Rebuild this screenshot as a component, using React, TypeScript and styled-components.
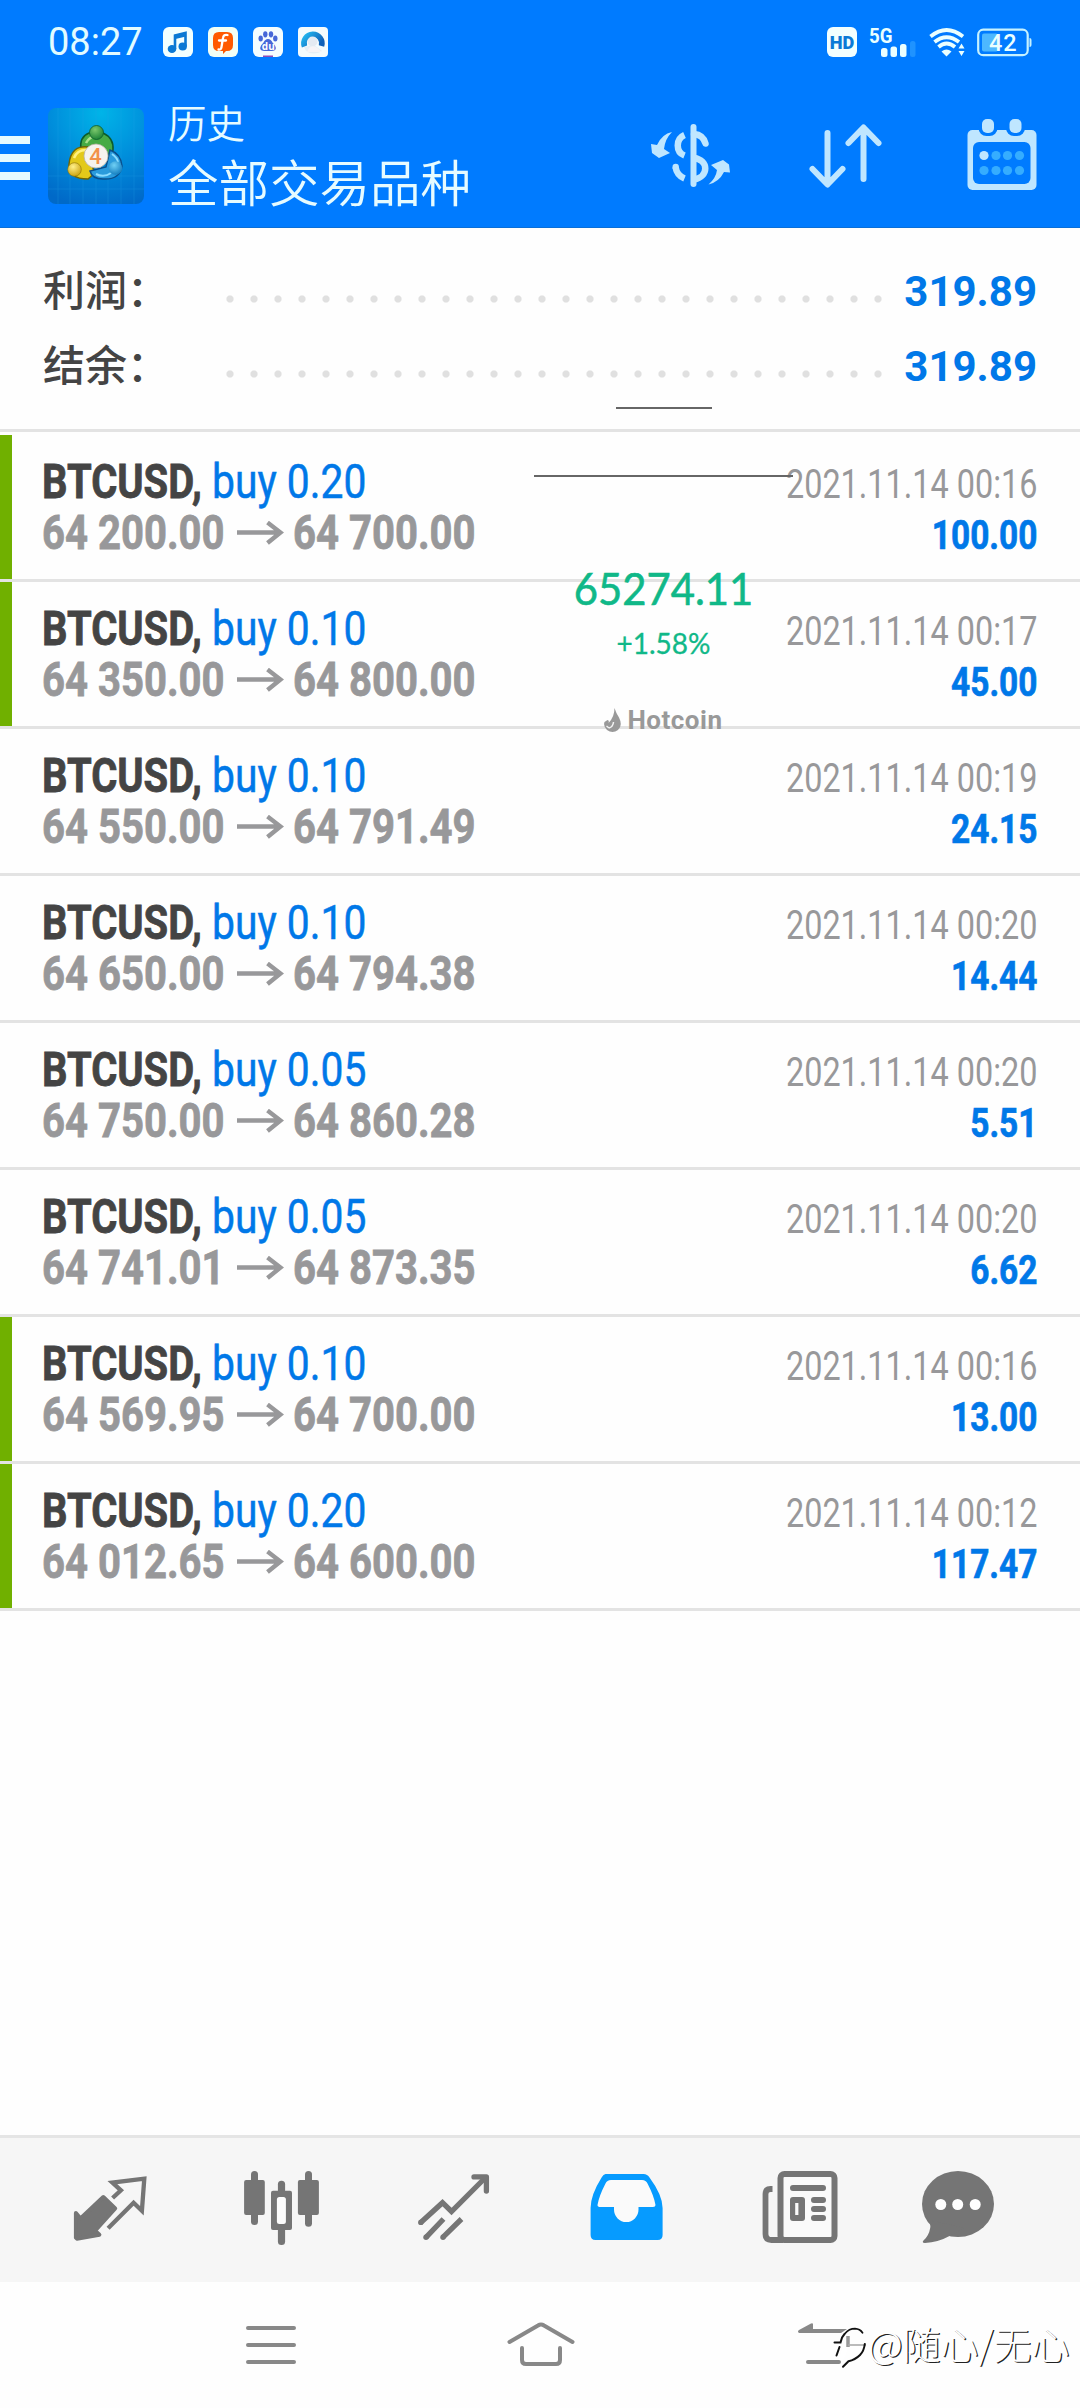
import React from 'react';
import styled, { createGlobalStyle } from 'styled-components';

const GlobalStyle = createGlobalStyle`
  * { box-sizing: border-box; }
  body { margin: 0; background: #fefefe; }
  svg { display: block; flex: none; }
`;

const roboto = `Roboto, "Noto Sans CJK SC", sans-serif`;
const cjk = `"Noto Sans CJK SC", sans-serif`;
const ice = '#bfe6ff';
const grey = '#757575';

const Screen = styled.div`
  position: relative;
  width: 1080px;
  height: 2408px;
  display: flex;
  flex-direction: column;
  overflow: hidden;
  background: #fefefe;
  font-family: ${roboto};
`;

const Header = styled.header`
  height: 228px;
  flex: none;
  background: #007bff;
  border-bottom: 1px solid #0a6fd8;
`;

const StatusBar = styled.div`
  height: 84px;
  padding: 0 48px;
  display: flex;
  align-items: center;
  justify-content: space-between;
`;

const StatusGroup = styled.div<{ $gap: number }>`
  display: flex;
  align-items: center;
  gap: ${(p) => p.$gap}px;
`;

const Clock = styled.span`
  width: 100px;
  font-size: 38px;
  line-height: 84px;
  color: #e2fbff;
  white-space: nowrap;
`;

const Toolbar = styled.div`
  height: 143px;
  display: flex;
  align-items: flex-start;
`;

const Burger = styled.div`
  width: 30px;
  margin-top: 52px;
  display: flex;
  flex-direction: column;
  gap: 10px;
`;

const BurgerBar = styled.span`
  height: 8px;
  background: #e6faff;
`;

const LogoBox = styled.div`
  margin: 24px 24px 0 18px;
`;

const Titles = styled.div`
  flex: 1;
  display: flex;
  flex-direction: column;
  font-family: ${cjk};
  font-weight: 350;
  color: #e6fbff;
`;

const Caption = styled.span`
  margin-top: 13px;
  font-size: 38.5px;
  line-height: 48px;
`;

const Title = styled.span`
  font-size: 50.5px;
  line-height: 70px;
`;

const Actions = styled.div`
  display: flex;
  align-items: flex-start;
  padding: 31px 43px 0 0;
`;

const Action = styled.div<{ $top: number; $gap: number }>`
  margin: ${(p) => p.$top}px ${(p) => p.$gap}px 0 0;
`;

const Summary = styled.section`
  height: 204px;
  flex: none;
  padding: 26px 43px 0 43px;
  border-bottom: 3px solid #e3e3e3;
`;

const SummaryRow = styled.div`
  height: 75px;
  display: flex;
  align-items: center;
`;

const SummaryLabel = styled.span`
  width: 175px;
  font-family: ${cjk};
  font-weight: 500;
  font-size: 42px;
  line-height: 67px;
  height: 75px;
  color: #444;
`;

const Leader = styled.div`
  width: 672px;
  height: 75px;
  background: radial-gradient(circle at 12px 45px, #e0e0e0 3px, transparent 4.2px) 0 0 / 24px 75px repeat-x;
`;

const SummaryValue = styled.span`
  flex: 1;
  text-align: right;
  font-weight: 700;
  font-size: 42px;
  line-height: 75px;
  color: #0078e8;
`;

const List = styled.section`
  flex: 1;
  padding-top: 3px;
`;

const Row = styled.article`
  height: 147px;
  display: flex;
  border-bottom: 3px solid #e3e3e3;
`;

const Marker = styled.span<{ $closed: boolean }>`
  width: 12px;
  background: ${(p) => (p.$closed ? '#70b000' : 'transparent')};
`;

const Deal = styled.div`
  flex: 1;
  padding: 21px 0 0 30px;
`;

const Line = styled.div`
  height: 51px;
  display: flex;
  align-items: center;
`;

const Slot = styled.span<{ $width: number }>`
  width: ${(p) => p.$width}px;
  white-space: nowrap;
`;

const Condensed = styled.span<{ $scale: number; $color: string; $bold?: boolean }>`
  display: inline-block;
  transform: scaleX(${(p) => p.$scale});
  transform-origin: left center;
  font-size: 48px;
  line-height: 51px;
  font-weight: ${(p) => (p.$bold ? 700 : 400)};
  -webkit-text-stroke: ${(p) => (p.$bold ? 0.8 : 0.5)}px currentColor;
  color: ${(p) => p.$color};
  white-space: pre;
`;

const Result = styled.div`
  width: 320px;
  padding: 24px 42.5px 0 0;
  display: flex;
  flex-direction: column;
  align-items: flex-end;
`;

const ResultText = styled(Condensed)`
  transform-origin: right center;
  font-size: 40px;
  -webkit-text-stroke-width: ${(p) => (p.$bold ? 0.7 : 0)}px;
`;

const Quote = styled.aside`
  position: absolute;
  top: 407px;
  left: 534px;
  width: 259px;
  display: flex;
  flex-direction: column;
  align-items: center;
`;

const Rule = styled.span<{ $width: number; $gap: number }>`
  width: ${(p) => p.$width}px;
  height: 2px;
  margin-bottom: ${(p) => p.$gap}px;
  background: #666;
`;

const Price = styled.span`
  font-family: Lato, sans-serif;
  font-size: 44px;
  line-height: 50px;
  color: #10b888;
  -webkit-text-stroke: 0.6px currentColor;
  transform: scaleX(0.95);
  margin-bottom: 13px;
`;

const Change = styled.span`
  font-family: Lato, sans-serif;
  font-size: 28px;
  line-height: 34px;
  color: #10b888;
  -webkit-text-stroke: 0.3px currentColor;
  margin-bottom: 45px;
`;

const Brand = styled.span`
  display: flex;
  align-items: center;
  gap: 6px;
  font-weight: 700;
  font-size: 26px;
  letter-spacing: 0.5px;
  line-height: 30px;
  color: #999;
`;

const TabBar = styled.nav`
  height: 147px;
  flex: none;
  display: flex;
  align-items: flex-start;
  padding: 24px 24px 0;
  background: #f6f6f6;
  border-top: 3px solid #e5e5e5;
`;

const Tab = styled.div`
  flex: 1;
  display: flex;
  justify-content: center;
`;

const SystemNav = styled.footer`
  height: 126px;
  flex: none;
  display: flex;
  padding: 36px 0 0 236px;
`;

const NavKey = styled.div<{ $gap: number }>`
  margin-right: ${(p) => p.$gap}px;
`;

const Watermark = styled.div`
  position: absolute;
  top: 2316px;
  left: 831px;
  display: flex;
  align-items: center;
  font-family: ${cjk};
  font-weight: 300;
  font-size: 38px;
  line-height: 54px;
  color: #fff;
  text-shadow: 1.2px 0.8px 0.3px #222;
  white-space: nowrap;
`;

const MusicBadge = () => (
  <svg width="30" height="30" viewBox="0 0 30 30">
    <rect width="30" height="30" rx="6" fill="#f2ffff" />
    <path d="M12 22V8.500L22.500 6v13.500" fill="none" stroke="#0b79d4" strokeWidth="2.600" />
    <path d="M12 10L22.500 7.500" stroke="#0b79d4" strokeWidth="4" />
    <ellipse cx="9" cy="22" rx="4.300" ry="4" fill="#0b79d4" />
    <ellipse cx="19.700" cy="19.500" rx="4.200" ry="4" fill="#0b79d4" />
  </svg>
);

const FBadge = () => (
  <svg width="30" height="30" viewBox="0 0 30 30">
    <rect width="30" height="30" rx="6" fill="#f2fff6" />
    <path d="M11 5h8q6 0 6 6v7q0 6-6 6h-1l-3 3v-3h-4q-6 0-6-6v-7q0-6 6-6z" fill="#ff5a00" />
    <path d="M19.500 8q-4-1-4.500 3l-1.500 9q-.5 3-3 2.500M11 13.500h7" fill="none" stroke="#fff" strokeWidth="2.300" strokeLinecap="round" />
  </svg>
);

const DuText = styled.text`
  font-family: "Open Sans", sans-serif;
  font-weight: 700;
  font-size: 10px;
  fill: #fff;
`;

const DuBadge = () => (
  <svg width="30" height="30" viewBox="0 0 30 30">
    <rect width="30" height="30" rx="6" fill="#f4fdff" />
    <g fill="#4668d8">
      <ellipse cx="7.700" cy="11.500" rx="2.200" ry="2.900" />
      <ellipse cx="12.300" cy="7.300" rx="2.200" ry="3.100" />
      <ellipse cx="18" cy="7.300" rx="2.200" ry="3.100" />
      <ellipse cx="22.300" cy="11.500" rx="2.200" ry="2.900" />
      <path d="M15 12q3 0 4.500 3.500l2.500 3q2.500 5-3 5.500h-8q-5.500-.5-3-5.500l2.500-3Q12 12 15 12z" />
    </g>
    <DuText x="8.800" y="22.500">du</DuText>
    <path d="M10 28.500h10v1.500H10z" fill="#8c4bb8" />
  </svg>
);

const BrowserBadge = () => (
  <svg width="30" height="30" viewBox="0 0 30 30">
    <defs>
      <linearGradient id="ring" x1="0" x2="1" y1="0" y2="0.600">
        <stop offset="0" stopColor="#22b8f0" />
        <stop offset="1" stopColor="#1060b8" />
      </linearGradient>
    </defs>
    <rect width="30" height="30" rx="4" fill="#f4fbfd" />
    <path d="M6 20q2 6 9 6.500 6-.5 9-2.500l-8-6z" fill="#e6eff5" />
    <path d="M6.500 19.500a9 9 0 1 1 17-.5" fill="none" stroke="url(#ring)" strokeWidth="5.600" />
    <circle cx="14.500" cy="14.500" r="5" fill="#e4eaf2" />
    <path d="M11 21q3-3 7-1l6 5H9z" fill="#f7f4f7" />
  </svg>
);

const StatusText = styled.text<{ $size: number; $weight: number }>`
  font-family: Roboto, sans-serif;
  font-size: ${(p) => p.$size}px;
  font-weight: ${(p) => p.$weight};
`;

const HdBadge = () => (
  <svg width="31" height="30" viewBox="0 0 31 30">
    <rect width="30" height="30" rx="6" fill="#f2ffff" />
    <StatusText $size={19} $weight={900} x="2.800" y="22" fill="#0b7ad6" textLength="24.500" lengthAdjust="spacingAndGlyphs">HD</StatusText>
  </svg>
);

const Signal = () => (
  <svg width="49" height="30" viewBox="0 0 49 30">
    <StatusText $size={20} $weight={700} x="0" y="15.500" fill="#eaffff" textLength="23.500" lengthAdjust="spacingAndGlyphs">5G</StatusText>
    <g fill="#eaffff">
      <rect x="12" y="21" width="6.500" height="9" rx="2.500" />
      <rect x="21.500" y="19.500" width="6.500" height="10.500" rx="2.500" />
      <rect x="31" y="17" width="6.500" height="13" rx="2.500" />
    </g>
    <rect x="41" y="14" width="5.500" height="16" rx="2.500" fill="#1f93ff" />
  </svg>
);

const Wifi = () => (
  <svg width="37" height="30" viewBox="0 0 37 30">
    <g fill="none" stroke="#eaffff" strokeWidth="3.800">
      <path d="M1.500 9.500Q17.500-3.500 34 9.500" />
      <path d="M5.500 15Q17.500 5.500 30 15" />
      <path d="M9.500 20Q17.500 13 26 20" />
    </g>
    <path d="M12.500 24.500q5-4 10 0l-5 5z" fill="#eaffff" />
    <path d="M29.500 21.500l3-5 3 5zM29.500 24h6l-3 5z" fill="#eaffff" />
  </svg>
);

const Battery = () => (
  <svg width="55" height="30" viewBox="0 -1 55 30">
    <rect x="1.200" y="1.700" width="49.500" height="25.500" rx="5" fill="none" stroke="#c6f2ff" strokeWidth="2.200" />
    <path d="M52.500 10q2 0 2 2v5q0 2-2 2z" fill="#c6f2ff" />
    <rect x="5" y="5.500" width="16" height="18" rx="2" fill="#4db8ff" />
    <StatusText $size={23.500} $weight={500} x="12" y="22.800" fill="#eaffff" textLength="27.500">42</StatusText>
  </svg>
);

const AppLogo = () => (
  <svg width="96" height="96" viewBox="0 0 96 96">
    <defs>
      <radialGradient id="tile" cx="0.550" cy="0.050" r="1">
        <stop offset="0" stopColor="#00b4e8" />
        <stop offset="0.500" stopColor="#008fdc" />
        <stop offset="1" stopColor="#0069c8" />
      </radialGradient>
      <radialGradient id="green" cx="0.400" cy="0.300" r="0.800">
        <stop offset="0" stopColor="#7cc86c" />
        <stop offset="1" stopColor="#117a2e" />
      </radialGradient>
      <radialGradient id="gold" cx="0.400" cy="0.300" r="0.800">
        <stop offset="0" stopColor="#fff08a" />
        <stop offset="1" stopColor="#c79a00" />
      </radialGradient>
      <radialGradient id="azure" cx="0.400" cy="0.300" r="0.800">
        <stop offset="0" stopColor="#6fd0f5" />
        <stop offset="1" stopColor="#0873b8" />
      </radialGradient>
    </defs>
    <rect width="96" height="96" rx="8" fill="url(#tile)" />
    <path d="M10 0v96M22 0v96M35 0v96M48 0v96M60 0v96M73 0v96M86 0v96M0 68h96M0 81h96" stroke="#2aa5ea" strokeWidth="0.800" opacity="0.300" />
    <path d="M33 42q-2-13 8-17h14q11 5 10 17l-5 12-12-12z" fill="#46ab45" stroke="#0c5c2c" strokeWidth="1.500" />
    <path d="M38 35q5-9 14-7" fill="none" stroke="#a9e08c" strokeWidth="2.500" />
    <path d="M40 39q-17-2-19 17-1 15 19 15l7-6-5-12z" fill="#e3c91a" stroke="#6d6508" strokeWidth="1.500" />
    <path d="M26 50q3-8 12-8" fill="none" stroke="#fff17d" strokeWidth="2.500" />
    <path d="M62 42q11 4 12 16-2 14-19 13-11 0-13-8l16-4z" fill="#2a9bdc" stroke="#0a4f8c" strokeWidth="1.500" />
    <path d="M64 46q6 4 6 9M48 66q8 4 15-1" fill="none" stroke="#8bdcff" strokeWidth="2" />
    <circle cx="48.500" cy="24.500" r="7" fill="url(#green)" stroke="#0c5c2c" strokeWidth="0.800" />
    <circle cx="26.500" cy="61.500" r="6.800" fill="url(#gold)" stroke="#8a7208" strokeWidth="0.600" />
    <circle cx="67.500" cy="60" r="6.800" fill="url(#azure)" />
    <circle cx="48" cy="48" r="12" fill="#f6f3ee" stroke="#b9b3a6" strokeWidth="0.800" />
    <StatusText $size={22} $weight={500} x="41.300" y="56" fill="#f2914a">4</StatusText>
  </svg>
);

const CurrencyIcon = () => (
  <svg width="80" height="66" viewBox="0 0 80 66">
    <path d="M42.500 3v57" stroke={ice} strokeWidth="6" strokeLinecap="round" />
    <g fill="none" stroke={ice} strokeWidth="6.500">
      <path d="M33.500 11c-9 4-9 17 0 20.500M24.500 43c1 6 4 9.500 9 11.500" />
      <path d="M43 10c6 .5 10 4 11.500 9.500" strokeLinecap="round" />
      <path d="M43 34c15 2 15 19 0 21.500" />
    </g>
    <circle cx="24.700" cy="43" r="3.200" fill={ice} />
    <path d="M21 8Q11 10 6 21L0 20l1 9 7 5 11-5-6-4Q14 15 21 8z" fill={ice} />
    <path d="M57.500 60.500Q68 58 73 48l6 .5-1-8-6-4.500-12 5 6 5Q65 54 57.500 60.500z" fill={ice} />
  </svg>
);

const SortIcon = () => (
  <svg width="75" height="66" viewBox="0 0 75 66">
    <g fill="none" stroke={ice} strokeWidth="6" strokeLinecap="round" strokeLinejoin="round">
      <path d="M18.500 10v51M3.500 46l15 15.500 15-15.500" />
      <path d="M54.500 56V5M39.500 20l15-15.500 15 15.500" />
    </g>
  </svg>
);

const CalendarIcon = () => (
  <svg width="70" height="76" viewBox="0 0 70 76">
    <rect x="0.500" y="15" width="69" height="60" rx="5" fill={ice} />
    <rect x="6" y="27" width="57.500" height="42" rx="6" fill="#007bff" />
    <rect x="11.500" y="0" width="19" height="21" rx="8" fill="#007bff" />
    <rect x="39" y="0" width="19" height="21" rx="8" fill="#007bff" />
    <rect x="15" y="4" width="12" height="14" rx="5" fill={ice} />
    <rect x="42.500" y="4" width="12" height="14" rx="5" fill={ice} />
    {[40.500, 55.500].map((y, r) =>
      [17, 29, 40.500, 52.500].map((x, c) => (
        <circle key={`${r}-${c}`} cx={x} cy={y} r="4.600" fill={r + c === 0 ? ice : '#35adff'} />
      )),
    )}
  </svg>
);

const ArrowRight = () => (
  <svg width="47" height="24" viewBox="0 0 47 24">
    <path d="M0 11.500h43M30.500 1.500l13 10-13 10.500" fill="none" stroke="#98989a" strokeWidth="4.400" />
  </svg>
);

const Flame = () => (
  <svg width="17" height="25" viewBox="0 0 17 25">
    <path d="M10.500 0q1.500 5 4.500 9.500 4 8-1 12.500-5.500 4-11 0-4-4-2.500-8l3-2q2 .5 1 3 6-6 6-15z" fill="#999" />
    <path d="M5 20q4-1 4.500-6M5 20l-2.500-2" stroke="#f3f3f3" strokeWidth="1.500" fill="none" />
  </svg>
);

const TabIcon = ({ children }: { children: React.ReactNode }) => (
  <svg width="96" height="96" viewBox="0 0 96 96">{children}</svg>
);

const QuotesIcon = () => (
  <TabIcon>
    <path d="M41.300 35L53.200 46.500 33.100 68.700l4.300 4-22.500 4-1-1V51l4.600 5.500z" fill={grey} stroke={grey} strokeWidth="4" strokeLinejoin="round" />
    <path d="M50.600 36l8.300-7.700-8.500-7.700 31.900-3.900-2.400 32-8.300-8-25.500 25.600" fill="none" stroke={grey} strokeWidth="4.300" />
  </TabIcon>
);

const ChartIcon = () => (
  <TabIcon>
    <g fill={grey}>
      <rect x="10.100" y="18" width="20.700" height="35" rx="2" />
      <rect x="17" y="9" width="7" height="54" rx="3.500" />
      <rect x="63.900" y="18" width="21" height="35" rx="2" />
      <rect x="71" y="9" width="7" height="55.700" rx="3.500" />
      <rect x="43.900" y="18.700" width="7.200" height="64.300" rx="3.500" />
      <rect x="37" y="28.700" width="21" height="39.300" rx="2" />
    </g>
    <rect x="42.900" y="35" width="9" height="27" rx="2.500" fill="#fcfcfc" />
  </TabIcon>
);

const TradeIcon = () => (
  <TabIcon>
    <g fill="none" stroke={grey} strokeWidth="5.300" strokeLinejoin="miter">
      <path d="M14.500 60.700l22-20 9 8.800 34-34" />
      <path d="M37.500 57L20 75.300M55.500 57L36.800 75.300" />
      <path d="M68 14.900h12.400V29" strokeLinecap="round" strokeLinejoin="round" />
    </g>
    <g fill={grey}>
      <circle cx="14.800" cy="60.400" r="2.700" />
      <circle cx="20" cy="75.300" r="2.700" />
      <circle cx="37" cy="75.300" r="2.700" />
    </g>
  </TabIcon>
);

const HistoryIcon = () => (
  <TabIcon>
    <path d="M27.500 12h38q4 0 6 3.500Q84.500 33 84.600 46v27q0 5-5 5H17.600q-5 0-5-5V46q0-13 11-30.500Q25.500 12 27.500 12z" fill="#069bff" />
    <path d="M33 18h31q4 0 5.500 3.500Q76 34 77.500 43q0 2-2.500 2H60.500v2.500a12.200 12.500 0 0 1-24.500 0V45H22.500q-3 0-3-2Q21 34 27.500 21.500 29 18 33 18z" fill="#fafafa" />
  </TabIcon>
);

const NewsIcon = () => (
  <TabIcon>
    <rect x="30.500" y="12" width="54" height="66" rx="4" fill="#fafafa" stroke={grey} strokeWidth="6" />
    <path d="M22.500 27h-2q-5 0-5 5v40q0 6 6 6h12" fill="none" stroke={grey} strokeWidth="5.800" />
    <path d="M43 26h30M64 38h9M64 47h9M64 56h9" stroke={grey} strokeWidth="6" strokeLinecap="round" />
    <rect x="40" y="35" width="15" height="24" rx="3" fill={grey} />
    <rect x="45.200" y="41" width="3.200" height="12" fill="#fafafa" />
  </TabIcon>
);

const ChatIcon = () => (
  <TabIcon>
    <ellipse cx="36" cy="42" rx="36" ry="33" fill={grey} />
    <path d="M6 58q3 3 2.200 8Q7 73.500 1.500 78.500-.5 81 3 81q13-.5 25-7.200l14-8z" fill={grey} />
    <circle cx="18.800" cy="42.500" r="5.500" fill="#fff" />
    <circle cx="35.700" cy="42.500" r="5.500" fill="#fff" />
    <circle cx="53.200" cy="42.500" r="5.500" fill="#fff" />
  </TabIcon>
);

const RecentsKey = () => (
  <svg width="70" height="56" viewBox="0 0 70 56">
    <path d="M12 10h46M12 27h46M12 44h46" stroke="#888" strokeWidth="4" strokeLinecap="round" />
  </svg>
);

const HomeKey = () => (
  <svg width="86" height="56" viewBox="0 0 86 56">
    <g fill="none" stroke="#888" strokeWidth="4" strokeLinecap="round">
      <path d="M11.500 24L40 7.500q3-2 6 0L74.500 24" />
      <path d="M24 30v12q0 4 4 4h30q4 0 4-4V30" />
    </g>
  </svg>
);

const BackKey = () => (
  <svg width="72" height="56" viewBox="0 0 72 56">
    <path d="M2 15q-2-1.500 0-3L14 5.500q2-1 2 1V11h34l-6 4z" fill="#888" />
    <path d="M11 44h31" stroke="#888" strokeWidth="4" strokeLinecap="round" />
    <path d="M51 18v11" stroke="#999" strokeWidth="3.500" />
    <path d="M51 27h18" stroke="#aaa" strokeWidth="1.600" />
  </svg>
);

const WatermarkLogo = () => (
  <svg width="37" height="54" viewBox="0 0 37 54">
    <g fill="none" strokeLinecap="round">
      <path d="M14 17.500Q18 12.700 24 12.700q5 .3 7.500 4" stroke="#111" strokeWidth="1.800" />
      <path d="M33.800 28Q33 35 29 39q-5 5-11.500 6.200l-5.500 5.500" stroke="#111" strokeWidth="2" />
      <path d="M13.500 18q-3 3-4 8.500H3.500M8.500 31L5.500 39.500" stroke="#111" strokeWidth="2" />
      <path d="M14 33l-3.500 9" stroke="#fff" strokeWidth="5" />
    </g>
  </svg>
);

const deals = [
  { lots: '0.20', open: '64 200.00', close: '64 700.00', time: '2021.11.14 00:16', profit: '100.00', closed: true },
  { lots: '0.10', open: '64 350.00', close: '64 800.00', time: '2021.11.14 00:17', profit: '45.00', closed: true },
  { lots: '0.10', open: '64 550.00', close: '64 791.49', time: '2021.11.14 00:19', profit: '24.15', closed: false },
  { lots: '0.10', open: '64 650.00', close: '64 794.38', time: '2021.11.14 00:20', profit: '14.44', closed: false },
  { lots: '0.05', open: '64 750.00', close: '64 860.28', time: '2021.11.14 00:20', profit: '5.51', closed: false },
  { lots: '0.05', open: '64 741.01', close: '64 873.35', time: '2021.11.14 00:20', profit: '6.62', closed: false },
  { lots: '0.10', open: '64 569.95', close: '64 700.00', time: '2021.11.14 00:16', profit: '13.00', closed: true },
  { lots: '0.20', open: '64 012.65', close: '64 600.00', time: '2021.11.14 00:12', profit: '117.47', closed: true },
];

const totals = [
  { label: '利润：', value: '319.89' },
  { label: '结余：', value: '319.89' },
];

const tabs = [QuotesIcon, ChartIcon, TradeIcon, HistoryIcon, NewsIcon, ChatIcon];

export default function App() {
  return (
    <Screen>
      <GlobalStyle />
      <Header>
        <StatusBar>
          <StatusGroup $gap={15}>
            <Clock>08:27</Clock>
            <MusicBadge />
            <FBadge />
            <DuBadge />
            <BrowserBadge />
          </StatusGroup>
          <StatusGroup $gap={11}>
            <HdBadge />
            <Signal />
            <Wifi />
            <Battery />
          </StatusGroup>
        </StatusBar>
        <Toolbar>
          <Burger>
            <BurgerBar />
            <BurgerBar />
            <BurgerBar />
          </Burger>
          <LogoBox>
            <AppLogo />
          </LogoBox>
          <Titles>
            <Caption>历史</Caption>
            <Title>全部交易品种</Title>
          </Titles>
          <Actions>
            <Action $top={9} $gap={78}>
              <CurrencyIcon />
            </Action>
            <Action $top={8} $gap={83}>
              <SortIcon />
            </Action>
            <Action $top={0} $gap={0}>
              <CalendarIcon />
            </Action>
          </Actions>
        </Toolbar>
      </Header>

      <Summary>
        {totals.map((t) => (
          <SummaryRow key={t.label}>
            <SummaryLabel>{t.label}</SummaryLabel>
            <Leader />
            <SummaryValue>{t.value}</SummaryValue>
          </SummaryRow>
        ))}
      </Summary>

      <List>
        {deals.map((d, i) => (
          <Row key={i}>
            <Marker $closed={d.closed} />
            <Deal>
              <Line>
                <Slot $width={170}>
                  <Condensed $bold $scale={0.832} $color="#444">BTCUSD,</Condensed>
                </Slot>
                <Condensed $scale={0.85} $color="#0078e8">{`buy ${d.lots}`}</Condensed>
              </Line>
              <Line>
                <Slot $width={195}>
                  <Condensed $bold $scale={0.835} $color="#98989a">{d.open}</Condensed>
                </Slot>
                <Slot $width={56}>
                  <ArrowRight />
                </Slot>
                <Condensed $bold $scale={0.835} $color="#98989a">{d.close}</Condensed>
              </Line>
            </Deal>
            <Result>
              <ResultText $scale={0.81} $color="#98989a">{d.time}</ResultText>
              <ResultText $bold $scale={0.835} $color="#0078e8">{d.profit}</ResultText>
            </Result>
          </Row>
        ))}
      </List>

      <TabBar>
        {tabs.map((Icon, i) => (
          <Tab key={i}>
            <Icon />
          </Tab>
        ))}
      </TabBar>

      <SystemNav>
        <NavKey $gap={192}>
          <RecentsKey />
        </NavKey>
        <NavKey $gap={213}>
          <HomeKey />
        </NavKey>
        <NavKey $gap={0}>
          <BackKey />
        </NavKey>
      </SystemNav>

      <Quote>
        <Rule $width={96} $gap={66} />
        <Rule $width={259} $gap={86} />
        <Price>65274.11</Price>
        <Change>+1.58%</Change>
        <Brand>
          <Flame />
          Hotcoin
        </Brand>
      </Quote>

      <Watermark>
        <WatermarkLogo />
        @随心/无心
      </Watermark>
    </Screen>
  );
}
